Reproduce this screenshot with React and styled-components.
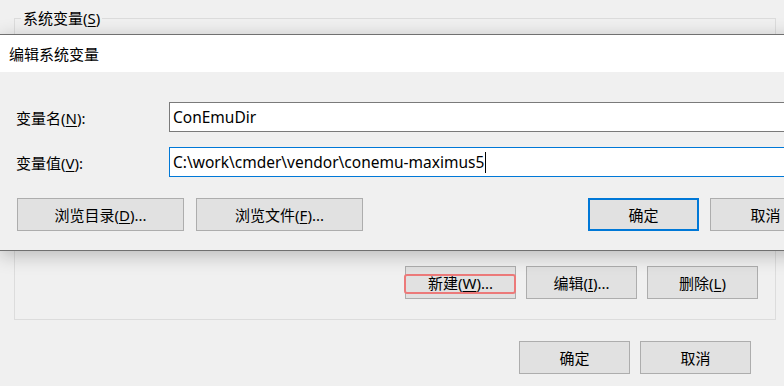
import React from "react";
import styled, { createGlobalStyle } from "styled-components";

const GlobalStyle = createGlobalStyle`
  html, body {
    margin: 0;
    padding: 0;
    overflow: hidden;
    background: #f0f0f0;
  }
  body {
    font-family: "Noto Sans", "Noto Sans CJK SC", sans-serif;
    font-size: 15px;
    color: #000;
  }
  u { text-underline-offset: 2px; }
`;

const Screen = styled.div`
  position: relative;
  width: 784px;
  height: 386px;
  overflow: hidden;
  background: #f0f0f0;
`;

const MainWindow = styled.div`
  display: flex;
  flex-direction: column;
  padding: 18px 0 0 14px;
`;

const GroupBox = styled.section`
  position: relative;
  box-sizing: border-box;
  width: 762px;
  height: 302px;
  padding: 0 17px 20px 0;
  border: 1px solid #dcdcdc;
  display: flex;
  flex-direction: column;
  justify-content: flex-end;
  align-items: flex-end;
`;

const GroupLabel = styled.h2`
  position: absolute;
  left: 6px;
  top: -9px;
  margin: 0;
  padding: 0 2px;
  font: inherit;
  line-height: 16px;
  background: #f0f0f0;
`;

const ButtonRow = styled.div`
  display: flex;
  gap: ${(p) => p.$gap || 10}px;
  justify-content: ${(p) => p.$justify || "flex-end"};
  padding-right: ${(p) => p.$pr || 0}px;
  margin-top: ${(p) => p.$mt || 0}px;
`;

const Button = styled.button`
  position: relative;
  box-sizing: border-box;
  width: ${(p) => p.$w || 111}px;
  height: 33px;
  margin: 0;
  padding: 0;
  background: #e1e1e1;
  border: ${(p) => (p.$primary ? "2px solid #0078d7" : "1px solid #adadad")};
  font: inherit;
  color: #000;
  display: flex;
  align-items: center;
  justify-content: center;
`;

const Highlight = styled.span`
  position: absolute;
  left: -2px;
  top: 7px;
  width: 112px;
  height: 20px;
  box-sizing: border-box;
  border: 2px solid #ec7a7a;
  border-radius: 3px;
  pointer-events: none;
`;

const Dialog = styled.div`
  position: absolute;
  left: 0;
  top: 34px;
  box-sizing: border-box;
  width: 838px;
  height: 217px;
  background: #f0f0f0;
  border-top: 1px solid #707070;
  border-bottom: 1px solid #707070;
  box-shadow: 0 4px 18px rgba(0, 0, 0, 0.24);
  display: flex;
  flex-direction: column;
`;

const TitleBar = styled.div`
  height: 37px;
  background: #fff;
  display: flex;
  align-items: center;
  padding-left: 9px;
  flex-shrink: 0;
`;

const DialogBody = styled.div`
  padding: 30px 17px 0 16px;
  display: flex;
  flex-direction: column;
`;

const FieldGrid = styled.div`
  display: grid;
  grid-template-columns: 153px 1fr;
  row-gap: 15px;
  align-items: center;
`;

const FieldLabel = styled.label``;

const TextField = styled.div`
  box-sizing: border-box;
  height: 30px;
  background: #fff;
  border: 1px solid ${(p) => (p.$focused ? "#0078d7" : "#7a7a7a")};
  padding: 0 3px;
  display: flex;
  align-items: center;
  white-space: nowrap;
  font-size: 15.5px;
`;

const Caret = styled.span`
  display: inline-block;
  width: 1px;
  height: 21px;
  background: #000;
  margin-left: 1px;
`;

const DialogButtons = styled.div`
  display: flex;
  justify-content: space-between;
  margin-top: 21px;
  padding-left: 1px;
`;

export default function App() {
  return (
    <Screen>
      <GlobalStyle />
      <MainWindow>
        <GroupBox>
          <GroupLabel>
            系统变量(<u>S</u>)
          </GroupLabel>
          <ButtonRow $gap={10}>
            <Button>
              新建(<u>W</u>)...
              <Highlight />
            </Button>
            <Button>
              编辑(<u>I</u>)...
            </Button>
            <Button>
              删除(<u>L</u>)
            </Button>
          </ButtonRow>
        </GroupBox>
        <ButtonRow $gap={10} $pr={33} $mt={21}>
          <Button>确定</Button>
          <Button>取消</Button>
        </ButtonRow>
      </MainWindow>

      <Dialog>
        <TitleBar>编辑系统变量</TitleBar>
        <DialogBody>
          <FieldGrid>
            <FieldLabel>
              变量名(<u>N</u>):
            </FieldLabel>
            <TextField>ConEmuDir</TextField>
            <FieldLabel>
              变量值(<u>V</u>):
            </FieldLabel>
            <TextField $focused>
              C:\work\cmder\vendor\conemu-maximus5
              <Caret />
            </TextField>
          </FieldGrid>
          <DialogButtons>
            <ButtonRow $gap={12} $justify="flex-start">
              <Button $w={167}>
                浏览目录(<u>D</u>)...
              </Button>
              <Button $w={167}>
                浏览文件(<u>F</u>)...
              </Button>
            </ButtonRow>
            <ButtonRow $gap={11}>
              <Button $primary>确定</Button>
              <Button>取消</Button>
            </ButtonRow>
          </DialogButtons>
        </DialogBody>
      </Dialog>
    </Screen>
  );
}
